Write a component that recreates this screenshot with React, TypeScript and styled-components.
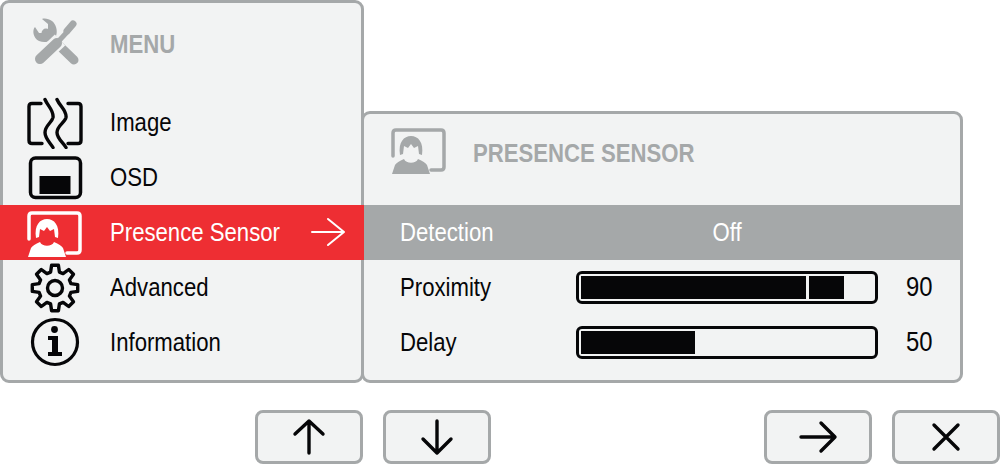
import React from 'react';
import styled, { createGlobalStyle } from 'styled-components';

const GREY = '#a5a8a9';
const PANEL = '#f2f3f3';
const INK = '#060608';

const GlobalStyle = createGlobalStyle`
  html, body {
    margin: 0;
    padding: 0;
    background: #fff;
    overflow: hidden;
  }
  body {
    font-family: "Liberation Sans", Arial, sans-serif;
  }
`;

function gearPath(cx: number, cy: number, outer: number, root: number) {
  const pts: string[] = [];
  for (let i = 0; i < 8; i++) {
    const a = (i * 45 * Math.PI) / 180 - Math.PI / 2;
    const offsets: [number, number][] = [
      [-0.27, root],
      [-0.15, outer],
      [0.15, outer],
      [0.27, root],
    ];
    offsets.forEach(([d, r]) => {
      pts.push(`${(cx + Math.cos(a + d) * r).toFixed(1)} ${(cy + Math.sin(a + d) * r).toFixed(1)}`);
    });
  }
  return `M${pts.join('L')}Z`;
}

const ToolsIcon = () => (
  <svg width="56" height="52" viewBox="-3 2 56 52">
    <g fill="none" strokeLinecap="round">
      <path d="M16 17 L44 44" stroke={GREY} strokeWidth="9" strokeLinecap="round" />
      <path
        d="M12 3 L18 8 V13 L14 17 H9 L5 11 C2 14 3 22 9 25 C14 27 18 26 21 24 L26 20 C28 15 26 8 22 5 C19 3 15 2 12 3Z"
        fill={GREY}
      />
      <path d="M9 44 L30 24" stroke={PANEL} strokeWidth="15" strokeLinecap="butt" />
      <path d="M10 43 L27 27" stroke={GREY} strokeWidth="10" />
      <path d="M26 28 L38 15" stroke={GREY} strokeWidth="5" strokeLinecap="butt" />
      <path d="M37 15 L43 8" stroke={GREY} strokeWidth="7" />
    </g>
  </svg>
);

const ImageIcon = () => (
  <svg width="56" height="52" viewBox="0 -1.5 56 52" fill="none" stroke={INK} strokeWidth="3.4" strokeLinecap="round">
    <path d="M14 5 H5 Q2 5 2 8 V42 Q2 45 5 45 H15" />
    <path d="M41 5 H51 Q54 5 54 8 V42 Q54 45 51 45 H41" />
    <path d="M18 1 C21 8 27 12 26 19 C25 24 18 27 18 34 C18 40 23 44 26 49" />
    <path d="M30 1 C33 8 40 12 39 19 C38 24 30 27 30 34 C30 40 36 44 39 49" />
  </svg>
);

const OsdIcon = () => (
  <svg width="56" height="52" viewBox="0 0 56 52">
    <rect x="3.5" y="6" width="50" height="39.5" rx="5" fill="none" stroke={INK} strokeWidth="3.5" />
    <rect x="12.5" y="24" width="31" height="18" fill={INK} />
  </svg>
);

const PersonIcon = ({ $fg }: { $fg: string }) => (
  <svg width="56" height="50" viewBox="0 -3 56 50">
    <path
      d="M2 28 V5 Q2 2 5 2 H50 Q53 2 53 5 V39 Q53 42 50 42 H40"
      fill="none"
      stroke={$fg}
      strokeWidth="3.5"
      strokeLinecap="round"
    />
    <path d="M1 46 L4 37 Q6 34 13 31 C15 36 25 36 27 31 Q34 34 36 37 L39 46Z" fill={$fg} />
    <path
      d="M9 27 C7 14 13 8 20 8 C27 8 33 14 31 27 L28 26 L27 18 L23 20 L20 16 L17 20 L13 18 L12 26Z"
      fill={$fg}
    />
  </svg>
);

const GearIcon = () => (
  <svg width="56" height="52" viewBox="0 0 56 52" fill="none" stroke={INK} strokeWidth="3.4" strokeLinejoin="round">
    <path d={gearPath(28, 26, 23, 16.5)} />
    <circle cx="28" cy="26" r="7.5" />
  </svg>
);

const InfoIcon = () => (
  <svg width="56" height="52" viewBox="0 1 56 52">
    <circle cx="28" cy="26" r="22.5" fill="none" stroke={INK} strokeWidth="3.2" />
    <circle cx="27.5" cy="13.5" r="3.4" fill={INK} />
    <path d="M21 20 H31 V36 H35 V40 H21 V36 H25 V24 H21Z" fill={INK} />
  </svg>
);

const RowArrow = () => (
  <svg width="36" height="30" viewBox="0 0 36 30" fill="none" stroke="#fff" strokeWidth="2" strokeLinecap="round" strokeLinejoin="round">
    <path d="M2 15 H34 M18 2 L34 15 L18 28" />
  </svg>
);

const KeyIcon = ({ d }: { d: string }) => (
  <svg width="40" height="40" viewBox="0 0 40 40" fill="none" stroke={INK} strokeWidth="3.4" strokeLinecap="round" strokeLinejoin="round">
    <path d={d} />
  </svg>
);

const Screen = styled.div`
  width: 1000px;
  height: 464px;
  display: flex;
  flex-direction: column;
`;

const Panels = styled.div`
  display: flex;
  align-items: flex-end;
  height: 383px;
`;

const Panel = styled.section`
  box-sizing: border-box;
  background: ${PANEL};
  border: 3px solid ${GREY};
  border-radius: 9px;
`;

const MenuPanel = styled(Panel)`
  position: relative;
  z-index: 1;
  width: 364px;
  height: 383px;
`;

const SubPanel = styled(Panel)`
  width: 602px;
  height: 272px;
  margin-left: -3px;
`;

const MenuHeader = styled.header`
  height: 92px;
  display: flex;
  align-items: center;
  padding: 0 0 10px 24px;
  box-sizing: border-box;
`;

const SubHeader = styled.header`
  height: 91px;
  display: flex;
  align-items: center;
  padding: 0 0 13px 27px;
  box-sizing: border-box;
`;

const IconSlot = styled.span`
  width: 56px;
  height: 52px;
  flex: none;
  display: flex;
  align-items: center;
  justify-content: center;
  margin-right: 27px;

  svg {
    display: block;
  }
`;

const SubIconSlot = styled(IconSlot)`
  margin: 0 26px 6px 0;
`;

const Label = styled.span<{ $bold?: boolean; $center?: boolean }>`
  display: inline-block;
  font-size: 26px;
  line-height: 30px;
  margin-bottom: 2px;
  white-space: nowrap;
  font-weight: ${({ $bold }) => ($bold ? 700 : 400)};
  transform: scaleX(0.852);
  transform-origin: ${({ $center }) => ($center ? 'center' : 'left')};
`;

const HeaderLabel = styled(Label)`
  color: ${GREY};
  margin-bottom: 0;
`;

const ValueLabel = styled(Label)`
  font-size: 28px;
`;

const MenuRow = styled.div<{ $active?: boolean }>`
  height: 55px;
  margin: 0 -3px;
  padding-left: 27px;
  display: flex;
  align-items: center;
  position: relative;
  color: ${({ $active }) => ($active ? '#fff' : INK)};
  background: ${({ $active }) => ($active ? '#ee2e33' : 'transparent')};
`;

const ArrowSlot = styled.span`
  position: absolute;
  left: 310px;
  top: 12px;
`;

const SubRow = styled.div<{ $active?: boolean }>`
  height: 55px;
  margin: 0 -3px;
  padding-left: 39px;
  display: grid;
  grid-template-columns: 176px 302px 1fr;
  align-items: center;
  color: ${({ $active }) => ($active ? '#fff' : INK)};
  background: ${({ $active }) => ($active ? GREY : 'transparent')};
`;

const CenterCell = styled.span`
  text-align: center;
`;

const ValueCell = styled.span`
  padding-left: 28px;
`;

const Track = styled.div`
  box-sizing: border-box;
  position: relative;
  height: 33px;
  border: 3px solid ${INK};
  border-radius: 6px;
  padding: 2px;
  background: ${PANEL};
`;

const Fill = styled.div`
  height: 100%;
  background: ${INK};
`;

const Marker = styled.span`
  position: absolute;
  left: 227px;
  top: 0;
  bottom: 0;
  width: 3px;
  background: ${PANEL};
`;

const Keys = styled.footer`
  display: flex;
  padding: 27px 0 0 255px;
  gap: 20px;
`;

const Key = styled.button`
  box-sizing: border-box;
  width: 108px;
  height: 54px;
  padding: 0;
  display: flex;
  align-items: center;
  justify-content: center;
  background: ${PANEL};
  border: 3px solid ${GREY};
  border-radius: 8px;
`;

const PushedKey = styled(Key)`
  margin-left: auto;
`;

const menuItems = [
  { label: 'Image', icon: <ImageIcon /> },
  { label: 'OSD', icon: <OsdIcon /> },
  { label: 'Presence Sensor', icon: <PersonIcon $fg="#fff" />, active: true },
  { label: 'Advanced', icon: <GearIcon /> },
  { label: 'Information', icon: <InfoIcon /> },
];

const sliders = [
  { label: 'Proximity', value: 90, fill: 90, marker: true },
  { label: 'Delay', value: 50, fill: 39, marker: false },
];

export default function App() {
  return (
    <Screen>
      <GlobalStyle />
      <Panels>
        <MenuPanel>
          <MenuHeader>
            <IconSlot>
              <ToolsIcon />
            </IconSlot>
            <HeaderLabel $bold>MENU</HeaderLabel>
          </MenuHeader>
          {menuItems.map((item) => (
            <MenuRow key={item.label} $active={item.active}>
              <IconSlot>{item.icon}</IconSlot>
              <Label>{item.label}</Label>
              {item.active && (
                <ArrowSlot>
                  <RowArrow />
                </ArrowSlot>
              )}
            </MenuRow>
          ))}
        </MenuPanel>
        <SubPanel>
          <SubHeader>
            <SubIconSlot>
              <PersonIcon $fg={GREY} />
            </SubIconSlot>
            <HeaderLabel $bold>PRESENCE SENSOR</HeaderLabel>
          </SubHeader>
          <SubRow $active>
            <Label>Detection</Label>
            <CenterCell>
              <Label $center>Off</Label>
            </CenterCell>
          </SubRow>
          {sliders.map((s) => (
            <SubRow key={s.label}>
              <Label>{s.label}</Label>
              <Track>
                <Fill style={{ width: `${s.fill}%` }} />
                {s.marker && <Marker />}
              </Track>
              <ValueCell>
                <ValueLabel>{s.value}</ValueLabel>
              </ValueCell>
            </SubRow>
          ))}
        </SubPanel>
      </Panels>
      <Keys>
        <Key>
          <KeyIcon d="M20 4 V36 M6 17 L20 4 L34 17" />
        </Key>
        <Key>
          <KeyIcon d="M20 4 V36 M6 22 L20 36 L34 22" />
        </Key>
        <PushedKey>
          <KeyIcon d="M3 20 H36 M23 6 L37 20 L23 34" />
        </PushedKey>
        <Key>
          <KeyIcon d="M8 8 L32 32 M32 8 L8 32" />
        </Key>
      </Keys>
    </Screen>
  );
}
